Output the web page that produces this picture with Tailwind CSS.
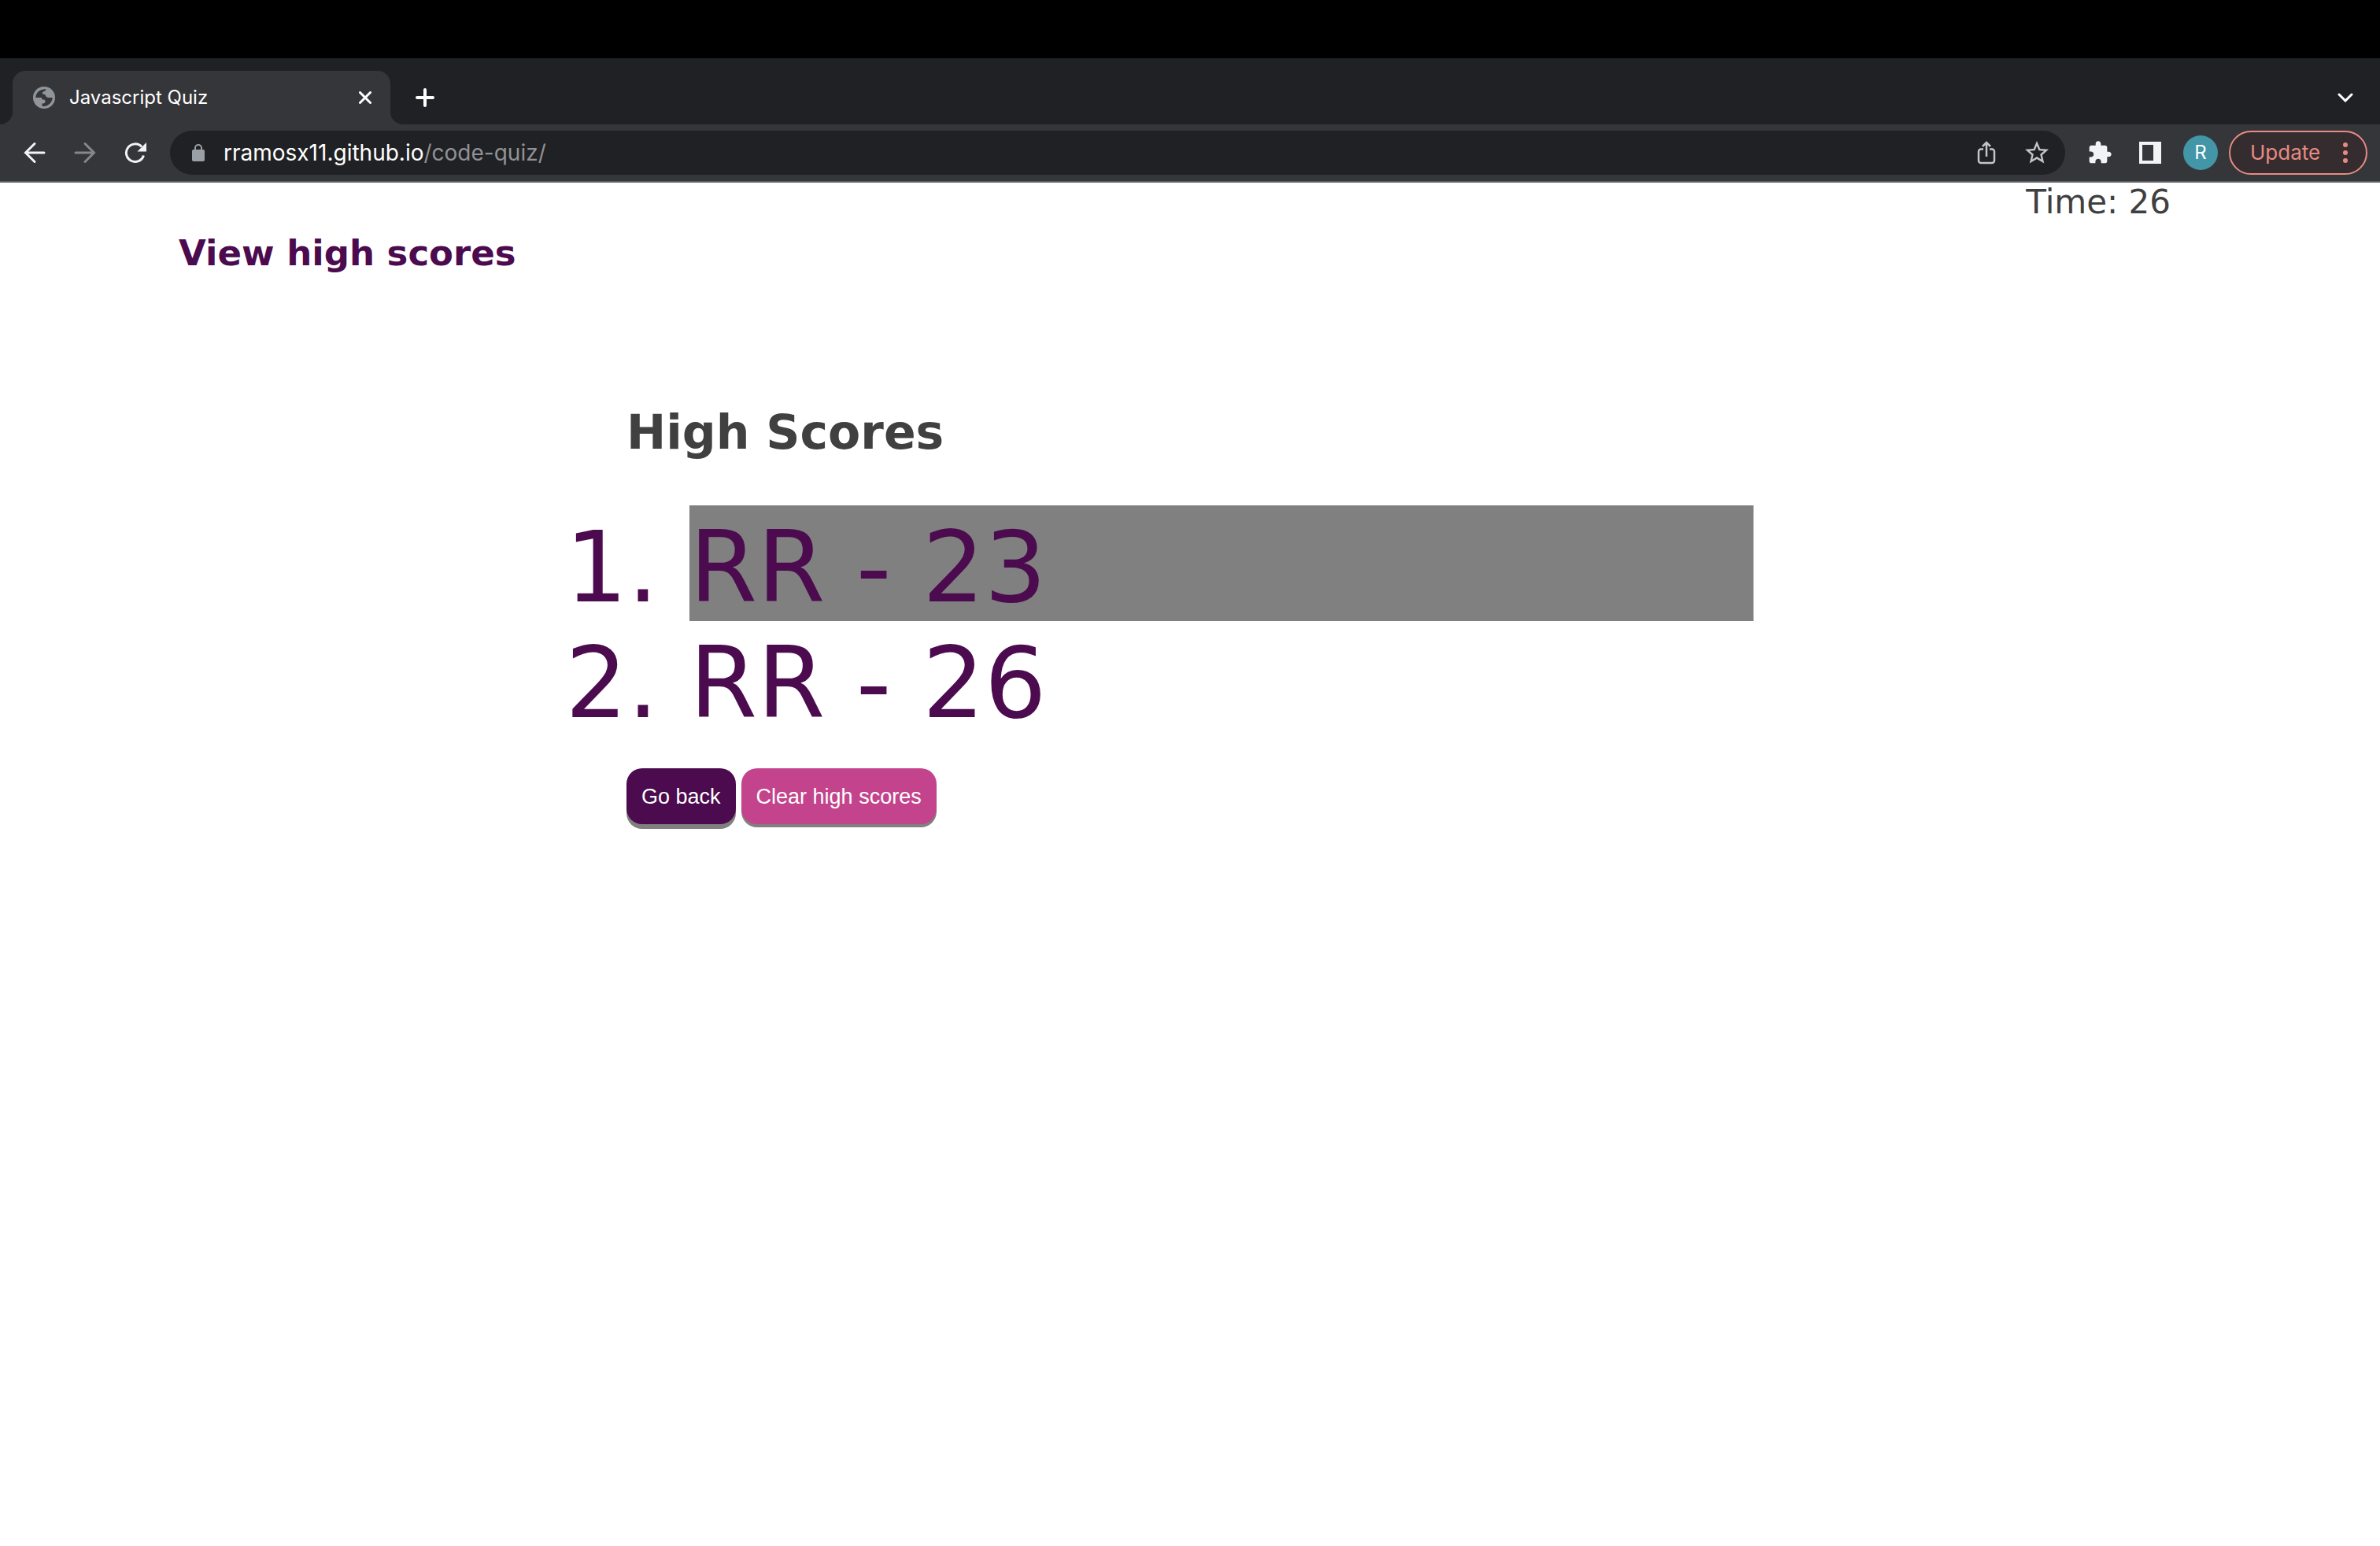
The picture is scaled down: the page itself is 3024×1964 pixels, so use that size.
<!DOCTYPE html>
<html lang="en">
<head>
<meta charset="utf-8">
<title>Javascript Quiz</title>
<script src="https://cdn.jsdelivr.net/npm/@tailwindcss/browser@4"></script>
</head>
<body class="min-h-screen bg-white font-['DejaVu_Sans',sans-serif] text-[#404040]">
<div class="h-[74px] bg-black"></div>
<header class="font-['Inter',sans-serif] text-white">
  <div class="flex h-[84px] items-end bg-[#202124] pr-[34px]">
    <div class="h-4 w-4 bg-[#35363a]"><div class="h-4 w-4 rounded-br-2xl bg-[#202124]"></div></div>
    <div class="flex h-[68px] w-[480px] items-center rounded-t-2xl bg-[#35363a] pr-6 pl-[26px]">
      <svg class="h-7 w-7 shrink-0" viewBox="0 0 28 28"><circle cx="14" cy="14" r="14" fill="#8f959b"/><path d="M3.300 14C3.300 8.500 8 3 16.500 3.300c0 1.700-.700 2.200-2.500 2.700-2 .500-2.500 1.500-2 3.500 2-.200 3.500.500 4 2 .500 2 2.500 2.500 4.500 2.500h4.200c0 6-5.700 12-13.200 10.700V21.500c2.500 0 4-.500 4-2.500s-1-2.500-3-2.500c-1.300 0-1.500-1-1.500-2.500z" fill="#35363a"/></svg>
      <span class="ml-[18px] flex-1 text-[24px] leading-8">Javascript Quiz</span>
      <button aria-label="Close tab"><svg class="h-4 w-4" viewBox="0 0 16 16" stroke="#fff" stroke-width="3" stroke-linecap="round"><path d="M1.500 1.500l13 13M14.500 1.500l-13 13"/></svg></button>
    </div>
    <div class="h-4 w-4 bg-[#35363a]"><div class="h-4 w-4 rounded-bl-2xl bg-[#202124]"></div></div>
    <button aria-label="New tab" class="mb-[22px] ml-4"><svg class="h-6 w-6" viewBox="0 0 24 24" stroke="#fff" stroke-width="4" stroke-linecap="round"><path d="M12 2v20M2 12h20"/></svg></button>
    <button aria-label="Search tabs" class="mb-7 ml-auto"><svg class="h-3 w-5" viewBox="0 0 20 12" fill="none" stroke="#fff" stroke-width="3" stroke-linecap="round"><path d="M2 2l8 8 8-8"/></svg></button>
  </div>
  <div class="flex h-[74px] items-center border-b-2 border-[#5f6063] bg-[#35363a] pr-4 pl-[30px]">
    <button aria-label="Back"><svg class="h-7 w-7" viewBox="0 0 28 28" fill="none" stroke="#f1f3f4" stroke-width="3" stroke-linecap="round"><path d="M26 14H3M14 2.500L2.500 14 14 25.500"/></svg></button>
    <button aria-label="Forward" class="ml-9"><svg class="h-7 w-7" viewBox="0 0 28 28" fill="none" stroke="#86878a" stroke-width="3" stroke-linecap="round"><path d="M2 14h23M14 2.500L25.500 14 14 25.500"/></svg></button>
    <button aria-label="Reload" class="ml-9"><svg class="h-7 w-7" viewBox="0 0 28 28" fill="none"><path d="M24.500 17.500A11.300 11.300 0 1 1 22 6.500" stroke="#f1f3f4" stroke-width="3"/><path d="M28 1v11.500H16.500z" fill="#f1f3f4"/></svg></button>
    <div class="ml-[30px] flex h-14 flex-1 items-center rounded-full bg-[#202124] pr-5 pl-7">
      <svg class="h-6 w-4 shrink-0" viewBox="0 0 16 24"><path d="M4 10V6a4 4 0 0 1 8 0v4" fill="none" stroke="#9aa0a6" stroke-width="2"/><rect y="8" width="16" height="15" rx="2" fill="#9aa0a6"/></svg>
      <span class="ml-6 flex-1 text-[28px] leading-9">rramosx11.github.io<span class="text-[#919295]">/code-quiz/</span></span>
      <button aria-label="Share"><svg class="h-[30px] w-6" viewBox="0 0 24 30" fill="none" stroke="#c4c5c6" stroke-width="2.500"><path d="M8 10.500H5a3 3 0 0 0-3 3V25a3 3 0 0 0 3 3h14a3 3 0 0 0 3-3V13.500a3 3 0 0 0-3-3h-3M12 20V2.500M7 7l5-5 5 5"/></svg></button>
      <button aria-label="Bookmark" class="ml-[34px] -mr-0.5"><svg class="h-9 w-9" viewBox="0 0 24 24" fill="#c4c5c6"><path d="M22 9.240l-7.190-.620L12 2 9.190 8.630 2 9.240l5.460 4.730L5.820 21 12 17.270 18.180 21l-1.630-7.030L22 9.240zM12 15.400l-3.760 2.270 1-4.280-3.320-2.880 4.380-.380L12 6.100l1.710 4.040 4.380.380-3.320 2.880 1 4.280L12 15.400z"/></svg></button>
    </div>
    <button aria-label="Extensions" class="ml-7"><svg class="h-8 w-8" viewBox="0 0 24 24" fill="#f1f3f4"><path d="M20.500 11H19V7c0-1.100-.900-2-2-2h-4V3.500C13 2.120 11.880 1 10.500 1S8 2.120 8 3.500V5H4c-1.100 0-1.990.900-1.990 2v3.800H3.500c1.490 0 2.700 1.210 2.700 2.700s-1.210 2.700-2.700 2.700H2V20c0 1.100.900 2 2 2h3.800v-1.500c0-1.490 1.210-2.700 2.700-2.700 1.490 0 2.700 1.210 2.700 2.700V22H17c1.100 0 2-.900 2-2v-4h1.500c1.380 0 2.500-1.120 2.500-2.500S21.880 11 20.500 11z"/></svg></button>
    <button aria-label="Side panel" class="ml-[34px]"><svg class="h-7 w-7" viewBox="0 0 28 28"><path d="M0 0h28v28H0zM4 4v20h14V4z" fill="#f1f3f4" fill-rule="evenodd"/></svg></button>
    <button aria-label="Profile" class="ml-7 h-11 w-11 rounded-full bg-[#4296a7] text-[24px] leading-11">R</button>
    <button class="ml-[14px] flex h-14 w-44 items-center rounded-full border-2 border-[#e78b82] bg-[#352c2f] pr-[22px] pl-[25px] text-[26px] leading-9 text-[#e78b82]">Update<svg class="ml-auto h-7 w-2" viewBox="0 0 8 28" fill="#e78b82"><circle cx="4" cy="4" r="3"/><circle cx="4" cy="14" r="3"/><circle cx="4" cy="24" r="3"/></svg></button>
  </div>
</header>
<nav class="flex items-start justify-between pr-[266px] pl-[227px]">
  <a href="#" class="mt-[62px] text-[45px] leading-14 font-bold text-[#4b0b4e]">View high scores</a>
  <p class="text-[42px] leading-[50px]">Time: 26</p>
</nav>
<main class="mx-auto mt-[162px] w-[1432px] max-w-full">
  <h1 class="text-[60px] leading-[74px] font-bold">High Scores</h1>
  <ol class="mt-14 list-decimal pl-20 text-[124px] leading-[135px] text-[#4b0b4e]">
    <li class="bg-[#808080] pt-3">RR - 23</li>
    <li class="pt-3">RR - 26</li>
  </ol>
  <div class="mt-10 flex gap-[7px] font-['Liberation_Sans',sans-serif] text-[27px] leading-8 text-white">
    <button class="h-[71px] rounded-[20px] bg-[#4b0b4e] px-[19px] shadow-[0_6px_0_#808080]">Go back</button>
    <button class="h-[71px] rounded-[20px] bg-[#c3448c] px-[19px] shadow-[0_4px_0_#808080]">Clear high scores</button>
  </div>
</main>
</body>
</html>
